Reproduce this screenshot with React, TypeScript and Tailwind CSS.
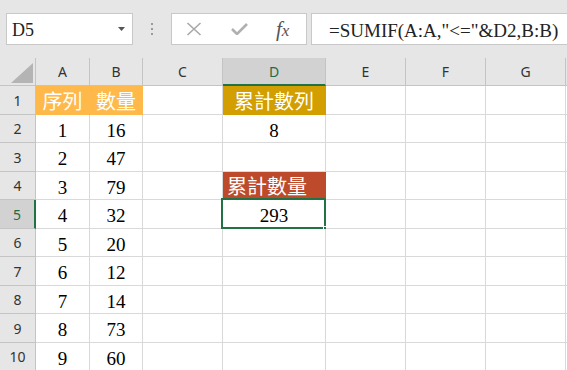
import React from "react";

const serif = "font-['Liberation_Serif','Noto_Sans_CJK_TC',serif]";

type Cell = { text?: string; fill?: string; align?: "center" | "left"; white?: boolean };

const rowHeights = [29, 28, 29, 28, 29, 28, 29, 28, 29, 28];

const data: Cell[][] = [
  [{ text: "序列", fill: "orange", white: true }, { text: "數量", fill: "orange", white: true }, {}, { text: "累計數列", fill: "gold", white: true }, {}, {}, {}, {}],
  [{ text: "1" }, { text: "16" }, {}, { text: "8" }, {}, {}, {}, {}],
  [{ text: "2" }, { text: "47" }, {}, {}, {}, {}, {}, {}],
  [{ text: "3" }, { text: "79" }, {}, { text: "累計數量", fill: "brown", white: true, align: "left" }, {}, {}, {}, {}],
  [{ text: "4" }, { text: "32" }, {}, { text: "293" }, {}, {}, {}, {}],
  [{ text: "5" }, { text: "20" }, {}, {}, {}, {}, {}, {}],
  [{ text: "6" }, { text: "12" }, {}, {}, {}, {}, {}, {}],
  [{ text: "7" }, { text: "14" }, {}, {}, {}, {}, {}, {}],
  [{ text: "8" }, { text: "73" }, {}, {}, {}, {}, {}, {}],
  [{ text: "9" }, { text: "60" }, {}, {}, {}, {}, {}, {}],
];

const cols = ["A", "B", "C", "D", "E", "F", "G", ""];

function fillClass(f?: string) {
  if (f === "orange") return "bg-[#ffb84a] border-[#ffb84a]";
  if (f === "gold") return "bg-[#d29e00] border-[#d29e00]";
  if (f === "brown") return "bg-[#bd4b2b] border-[#bd4b2b]";
  return "bg-white border-[#d9d9d9]";
}

export default function App() {
  return (
    <div className="w-[567px] h-[370px] overflow-hidden bg-[#e6e6e6] flex flex-col">
      {/* toolbar */}
      <div className="flex items-center h-[32px] mt-[13px] shrink-0">
        <div className="shrink-0 ml-[6px] w-[127px] h-[32px] bg-white border border-[#c8c8c8] flex items-center justify-between pl-[5px] pr-[7px]">
          <span className={`${serif} text-[18px] text-[#222] leading-none pt-[2px]`}>D5</span>
          <svg width="7" height="4" viewBox="0 0 7 4"><path d="M0 0 L7 0 L3.5 4 Z" fill="#555" /></svg>
        </div>
        <div className="shrink-0 w-[38px] flex flex-col items-center gap-[3px]">
          <span className="w-[2px] h-[2px] bg-[#9a9a9a]" />
          <span className="w-[2px] h-[2px] bg-[#9a9a9a]" />
          <span className="w-[2px] h-[2px] bg-[#9a9a9a]" />
        </div>
        <div className="shrink-0 w-[136px] h-[32px] bg-white border border-[#c8c8c8] flex items-center">
          <svg className="ml-[14px]" width="16" height="14" viewBox="0 0 16 14">
            <path d="M1.5 1 L14.5 13 M14.5 1 L1.5 13" stroke="#a8a8a8" strokeWidth="1.6" fill="none" />
          </svg>
          <svg className="ml-[29px]" width="17" height="12" viewBox="0 0 17 12">
            <path d="M1 6 L6 11 L16 1" stroke="#b0b0b0" strokeWidth="2.6" fill="none" />
          </svg>
          <span className={`ml-[28px] font-['Liberation_Serif',serif] italic text-[21px] text-[#555] leading-none`}>
            f<span className="text-[17px]">x</span>
          </span>
        </div>
        <div className="shrink-0 ml-[4px] w-[270px] h-[32px] bg-white border border-[#c8c8c8] flex items-center pl-[17px]">
          <span className={`${serif} text-[19px] text-[#222] leading-none whitespace-nowrap pt-[2px]`}>=SUMIF(A:A,"&lt;="&amp;D2,B:B)</span>
        </div>
      </div>

      {/* grid */}
      <div className="mt-[13px] grid grid-cols-[36px_54px_53px_80px_103px_80px_80px_80px_80px]">
        {/* header row */}
        <div className="relative h-[28px] bg-[#e6e6e6] border-r border-b border-[#c4c4c4]">
          <svg className="absolute left-[11px] top-[5px]" width="22" height="20" viewBox="0 0 22 20">
            <path d="M22 0 L22 20 L0 20 Z" fill="#b4b4b4" />
          </svg>
        </div>
        {cols.map((c, i) => {
          const sel = c === "D";
          return (
            <div
              key={i}
              className={`h-[28px] flex items-center justify-center font-['Noto_Sans',sans-serif] text-[14px] border-r ${
                sel
                  ? "bg-[#d2d2d2] text-[#1f6b47] border-b-2 border-b-[#217346] border-r-[#c4c4c4]"
                  : "bg-[#e6e6e6] text-[#333] border-b border-[#c4c4c4]"
              }`}
            >
              {c}
            </div>
          );
        })}

        {data.map((row, ri) => {
          const h = rowHeights[ri];
          const selRow = ri === 4;
          return (
            <React.Fragment key={ri}>
              <div
                style={{ height: h }}
                className={`flex items-center justify-center font-['Noto_Sans',sans-serif] text-[14px] border-b ${
                  selRow
                    ? "bg-[#d2d2d2] text-[#1f6b47] border-r-2 border-r-[#217346] border-b-[#c4c4c4]"
                    : "bg-[#e6e6e6] text-[#333] border-r border-[#c4c4c4]"
                }`}
              >
                {ri + 1}
              </div>
              {row.map((cell, ci) => {
                const isSel = ri === 4 && ci === 3;
                const cjk = cell.text && /[^\x00-\x7f]/.test(cell.text);
                return (
                  <div
                    key={ci}
                    style={{ height: h }}
                    className={`relative flex items-center border-r border-b ${fillClass(cell.fill)} ${
                      cell.align === "left" ? "justify-start pl-[4px]" : "justify-center"
                    }`}
                  >
                    {cell.text && (
                      <span
                        className={`${serif} ${cjk ? "text-[20px]" : "text-[19px]"} leading-none pt-[3px] ${
                          cell.white ? "text-white" : "text-black"
                        }`}
                      >
                        {cell.text}
                      </span>
                    )}
                    {isSel && (
                      <>
                        <div className="absolute left-[-2px] top-[-2px] right-[-1px] bottom-[-1px] border-2 border-[#217346]" />
                        <div className="absolute right-[-4px] bottom-[-4px] w-[6px] h-[6px] bg-[#217346] border border-white" />
                      </>
                    )}
                  </div>
                );
              })}
            </React.Fragment>
          );
        })}
      </div>
    </div>
  );
}
